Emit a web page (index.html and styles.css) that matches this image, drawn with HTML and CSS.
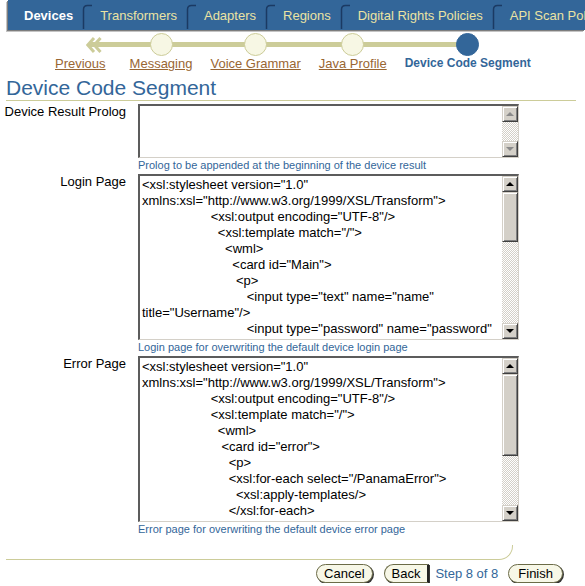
FILE: index.html
```html
<!DOCTYPE html>
<html lang="en">
<head>
    <meta charset="UTF-8">
    <meta name="viewport" content="width=device-width, initial-scale=1.0">
    <title>Device Code Segment</title>
    <link rel="stylesheet" href="styles.css">
</head>
<body>

    <!-- Global tabs -->
    <nav class="tabbar">
        <a href="#" class="tab tab-active">Devices</a>
        <svg class="tab-sep" width="10" height="26" viewBox="0 0 10 26"><path d="M1.5 26V6.5Q1.5 2.5 5.5 2.5H10" fill="none" stroke="#1b3a63" stroke-width="1.5"/></svg>
        <a href="#" class="tab">Transformers</a>
        <svg class="tab-sep" width="10" height="26" viewBox="0 0 10 26"><path d="M1.5 26V6.5Q1.5 2.5 5.5 2.5H10" fill="none" stroke="#1b3a63" stroke-width="1.5"/></svg>
        <a href="#" class="tab">Adapters</a>
        <svg class="tab-sep" width="10" height="26" viewBox="0 0 10 26"><path d="M1.5 26V6.5Q1.5 2.5 5.5 2.5H10" fill="none" stroke="#1b3a63" stroke-width="1.5"/></svg>
        <a href="#" class="tab">Regions</a>
        <svg class="tab-sep" width="10" height="26" viewBox="0 0 10 26"><path d="M1.5 26V6.5Q1.5 2.5 5.5 2.5H10" fill="none" stroke="#1b3a63" stroke-width="1.5"/></svg>
        <a href="#" class="tab">Digital Rights Policies</a>
        <svg class="tab-sep" width="10" height="26" viewBox="0 0 10 26"><path d="M1.5 26V6.5Q1.5 2.5 5.5 2.5H10" fill="none" stroke="#1b3a63" stroke-width="1.5"/></svg>
        <a href="#" class="tab">API Scan Policies</a>
    </nav>

    <!-- Wizard train -->
    <div class="train">
        <div class="step step-prev">
            <div class="marker">
                <svg width="16" height="18" viewBox="0 0 16 18"><path d="M8 2 1.8 9 8 16M14.5 2 8.3 9 14.5 16" fill="none" stroke="#cccc99" stroke-width="3"/></svg>
            </div>
            <a href="#" class="step-label">Previous</a>
        </div>
        <div class="step">
            <div class="marker"><span class="dot"></span></div>
            <a href="#" class="step-label">Messaging</a>
        </div>
        <div class="step">
            <div class="marker"><span class="dot"></span></div>
            <a href="#" class="step-label">Voice Grammar</a>
        </div>
        <div class="step">
            <div class="marker"><span class="dot"></span></div>
            <a href="#" class="step-label">Java Profile</a>
        </div>
        <div class="step step-current">
            <div class="marker"><span class="dot"></span></div>
            <span class="step-label">Device Code Segment</span>
        </div>
    </div>

    <h1 class="page-title">Device Code Segment</h1>

    <form class="form">
        <!-- Device Result Prolog -->
        <div class="form-row">
            <label class="form-label" for="prolog">Device Result Prolog</label>
            <div class="form-control">
                <div class="field field-short">
                    <textarea id="prolog"></textarea>
                    <div class="vscroll vscroll-off">
                        <span class="sb-btn sb-up"></span>
                        <span class="sb-track"></span>
                        <span class="sb-btn sb-down"></span>
                    </div>
                </div>
                <div class="hint">Prolog to be appended at the beginning of the device result</div>
            </div>
        </div>

        <!-- Login Page -->
        <div class="form-row">
            <label class="form-label" for="loginPage">Login Page</label>
            <div class="form-control">
                <div class="field">
                    <textarea id="loginPage">&lt;xsl:stylesheet version="1.0" xmlns:xsl="http://www.w3.org/1999/XSL/Transform"&gt;
                   &lt;xsl:output encoding="UTF-8"/&gt;
                     &lt;xsl:template match="/"&gt;
                       &lt;wml&gt;
                         &lt;card id="Main"&gt;
                          &lt;p&gt;
                             &lt;input type="text" name="name" title="Username"/&gt;
                             &lt;input type="password" name="password" title="Password"/&gt;
                             &lt;do type="accept" label="Login"&gt;</textarea>
                    <div class="vscroll">
                        <span class="sb-btn sb-up"></span>
                        <span class="sb-track"><span class="sb-thumb" style="height: 50px;"></span></span>
                        <span class="sb-btn sb-down"></span>
                    </div>
                </div>
                <div class="hint">Login page for overwriting the default device login page</div>
            </div>
        </div>

        <!-- Error Page -->
        <div class="form-row">
            <label class="form-label" for="errorPage">Error Page</label>
            <div class="form-control">
                <div class="field">
                    <textarea id="errorPage">&lt;xsl:stylesheet version="1.0" xmlns:xsl="http://www.w3.org/1999/XSL/Transform"&gt;
                   &lt;xsl:output encoding="UTF-8"/&gt;
                   &lt;xsl:template match="/"&gt;
                     &lt;wml&gt;
                      &lt;card id="error"&gt;
                        &lt;p&gt;
                        &lt;xsl:for-each select="/PanamaError"&gt;
                          &lt;xsl:apply-templates/&gt;
                        &lt;/xsl:for-each&gt;
                        &lt;/p&gt;</textarea>
                    <div class="vscroll">
                        <span class="sb-btn sb-up"></span>
                        <span class="sb-track"><span class="sb-thumb" style="height: 82px;"></span></span>
                        <span class="sb-btn sb-down"></span>
                    </div>
                </div>
                <div class="hint">Error page for overwriting the default device error page</div>
            </div>
        </div>
    </form>

    <!-- Wizard footer -->
    <div class="foot-rule"></div>
    <div class="foot-actions">
        <button type="button" class="btn btn-cancel">Cancel</button>
        <button type="button" class="btn btn-back">Back</button>
        <span class="step-count">Step 8 of 8</span>
        <button type="button" class="btn btn-finish">Finish</button>
    </div>

</body>
</html>
```

FILE: styles.css
```css
* {
    box-sizing: border-box;
    margin: 0;
    padding: 0;
}

body {
    font-family: "Liberation Sans", Arial, sans-serif;
    font-size: 13px;
    color: #000;
    background-color: #fff;
    overflow: hidden;
}

/* Tabs */
.tabbar {
    display: flex;
    align-items: center;
    height: 30px;
    margin-left: 8px;
    padding-left: 16px;
    background-color: #336699;
    box-shadow: -1px 1px 0 #7d7d7d, -2px 2px 0 #c4c4c4;
    white-space: nowrap;
    overflow: hidden;
}

.tab {
    flex: none;
    margin-right: 9px;
    color: #ebe3a3;
    font-size: 13px;
    text-decoration: none;
}

.tab-active {
    color: #fff;
    font-weight: bold;
}

.tab-sep {
    flex: none;
    align-self: flex-end;
    margin: 0 8px 1px 0;
}

/* Train */
.train {
    display: flex;
    margin: 3px 0 0 46px;
}

.step {
    position: relative;
    display: flex;
    flex-direction: column;
    align-items: center;
    padding: 0 9px;
}

.step::before {
    content: "";
    position: absolute;
    left: 0;
    right: 0;
    top: 9px;
    height: 5px;
    background-color: #cccc99;
}

.step-prev {
    align-items: flex-start;
    padding-right: 15px;
}

.step-prev::before {
    left: 43px;
}

.step-current::before {
    right: 50%;
}

.marker {
    position: relative;
    display: flex;
    align-items: center;
    height: 23px;
}

.step-prev .marker {
    margin-left: 31px;
}

.dot {
    width: 23px;
    height: 23px;
    border-radius: 50%;
    border: 1px solid #cccc99;
    background-color: #f7f7e4;
}

.step-current .dot {
    border-color: #336699;
    background-color: #336699;
}

.step-label {
    font-size: 13px;
    line-height: 15px;
    color: #996633;
    text-decoration: underline;
}

.step-current .step-label {
    font-size: 12px;
    font-weight: bold;
    color: #336699;
    text-decoration: none;
}

/* Title */
.page-title {
    margin: 5px 9px 0 6px;
    font-size: 21px;
    font-weight: normal;
    line-height: 24px;
    color: #336699;
    border-bottom: 1px solid #cccc99;
}

/* Form */
.form {
    margin: 3px 0 0 2px;
}

.form-row {
    display: grid;
    grid-template-columns: 124px 381px;
    column-gap: 12px;
}

.form-label {
    text-align: right;
    line-height: 16px;
    white-space: nowrap;
}

.field {
    display: flex;
    height: 166px;
    border-style: solid;
    border-width: 2px 1px 1px 2px;
    border-color: #5c5c5c #d4d0c8 #d4d0c8 #5c5c5c;
    background-color: #fff;
}

.field-short {
    height: 54px;
}

.field textarea {
    flex: 1;
    width: 0;
    min-width: 0;
    padding: 1px 2px;
    border: none;
    outline: none;
    resize: none;
    overflow: hidden;
    font-family: "Liberation Sans", Arial, sans-serif;
    font-size: 13px;
    line-height: 16px;
    color: #000;
    background-color: #fff;
}

.hint {
    margin-bottom: 1px;
    font-size: 11px;
    line-height: 15px;
    color: #336699;
}

/* Classic scrollbar */
.vscroll {
    flex: none;
    display: flex;
    flex-direction: column;
    width: 16px;
    background: repeating-conic-gradient(#d4d0c8 0 25%, #fff 0 50%) 0 0 / 2px 2px;
}

.sb-btn,
.sb-thumb {
    display: flex;
    align-items: center;
    justify-content: center;
    background-color: #d4d0c8;
    border: 1px solid;
    border-color: #d4d0c8 #404040 #404040 #d4d0c8;
    box-shadow: inset 1px 1px 0 #fff, inset -1px -1px 0 #808080;
}

.sb-btn {
    flex: none;
    height: 16px;
}

.sb-track {
    flex: 1;
}

.sb-up::after,
.sb-down::after {
    content: "";
    border: 4px solid transparent;
}

.sb-up::after {
    border-top-width: 0;
    border-bottom-color: #000;
}

.sb-down::after {
    border-bottom-width: 0;
    border-top-color: #000;
}

.vscroll-off .sb-up::after {
    border-bottom-color: #8a8a8a;
}

.vscroll-off .sb-down::after {
    border-top-color: #8a8a8a;
}

/* Footer */
.foot-rule {
    width: 507px;
    height: 15px;
    margin: 7px 0 0 6px;
    border-bottom: 1px solid #cccc99;
    border-right: 1px solid #cccc99;
    border-bottom-right-radius: 14px;
}

.foot-actions {
    display: flex;
    justify-content: flex-end;
    align-items: center;
    margin-top: 4px;
    padding-right: 22px;
}

.btn {
    height: 19px;
    padding: 0 7px;
    font-family: "Liberation Sans", Arial, sans-serif;
    font-size: 13px;
    line-height: 17px;
    color: #000;
    background-color: #f7f7e7;
    border: 1px solid #6b6b47;
    border-radius: 10px;
    box-shadow: 1px 1px 0 #333;
    cursor: pointer;
}

.btn-cancel {
    margin-right: 11px;
}

.btn-back {
    margin-right: 6px;
    border-radius: 10px 0 0 10px;
    border-right: 2px solid #222;
}

.btn-finish {
    padding: 0 9px;
}

.step-count {
    margin-right: 10px;
    font-size: 13px;
    color: #336699;
}
```
